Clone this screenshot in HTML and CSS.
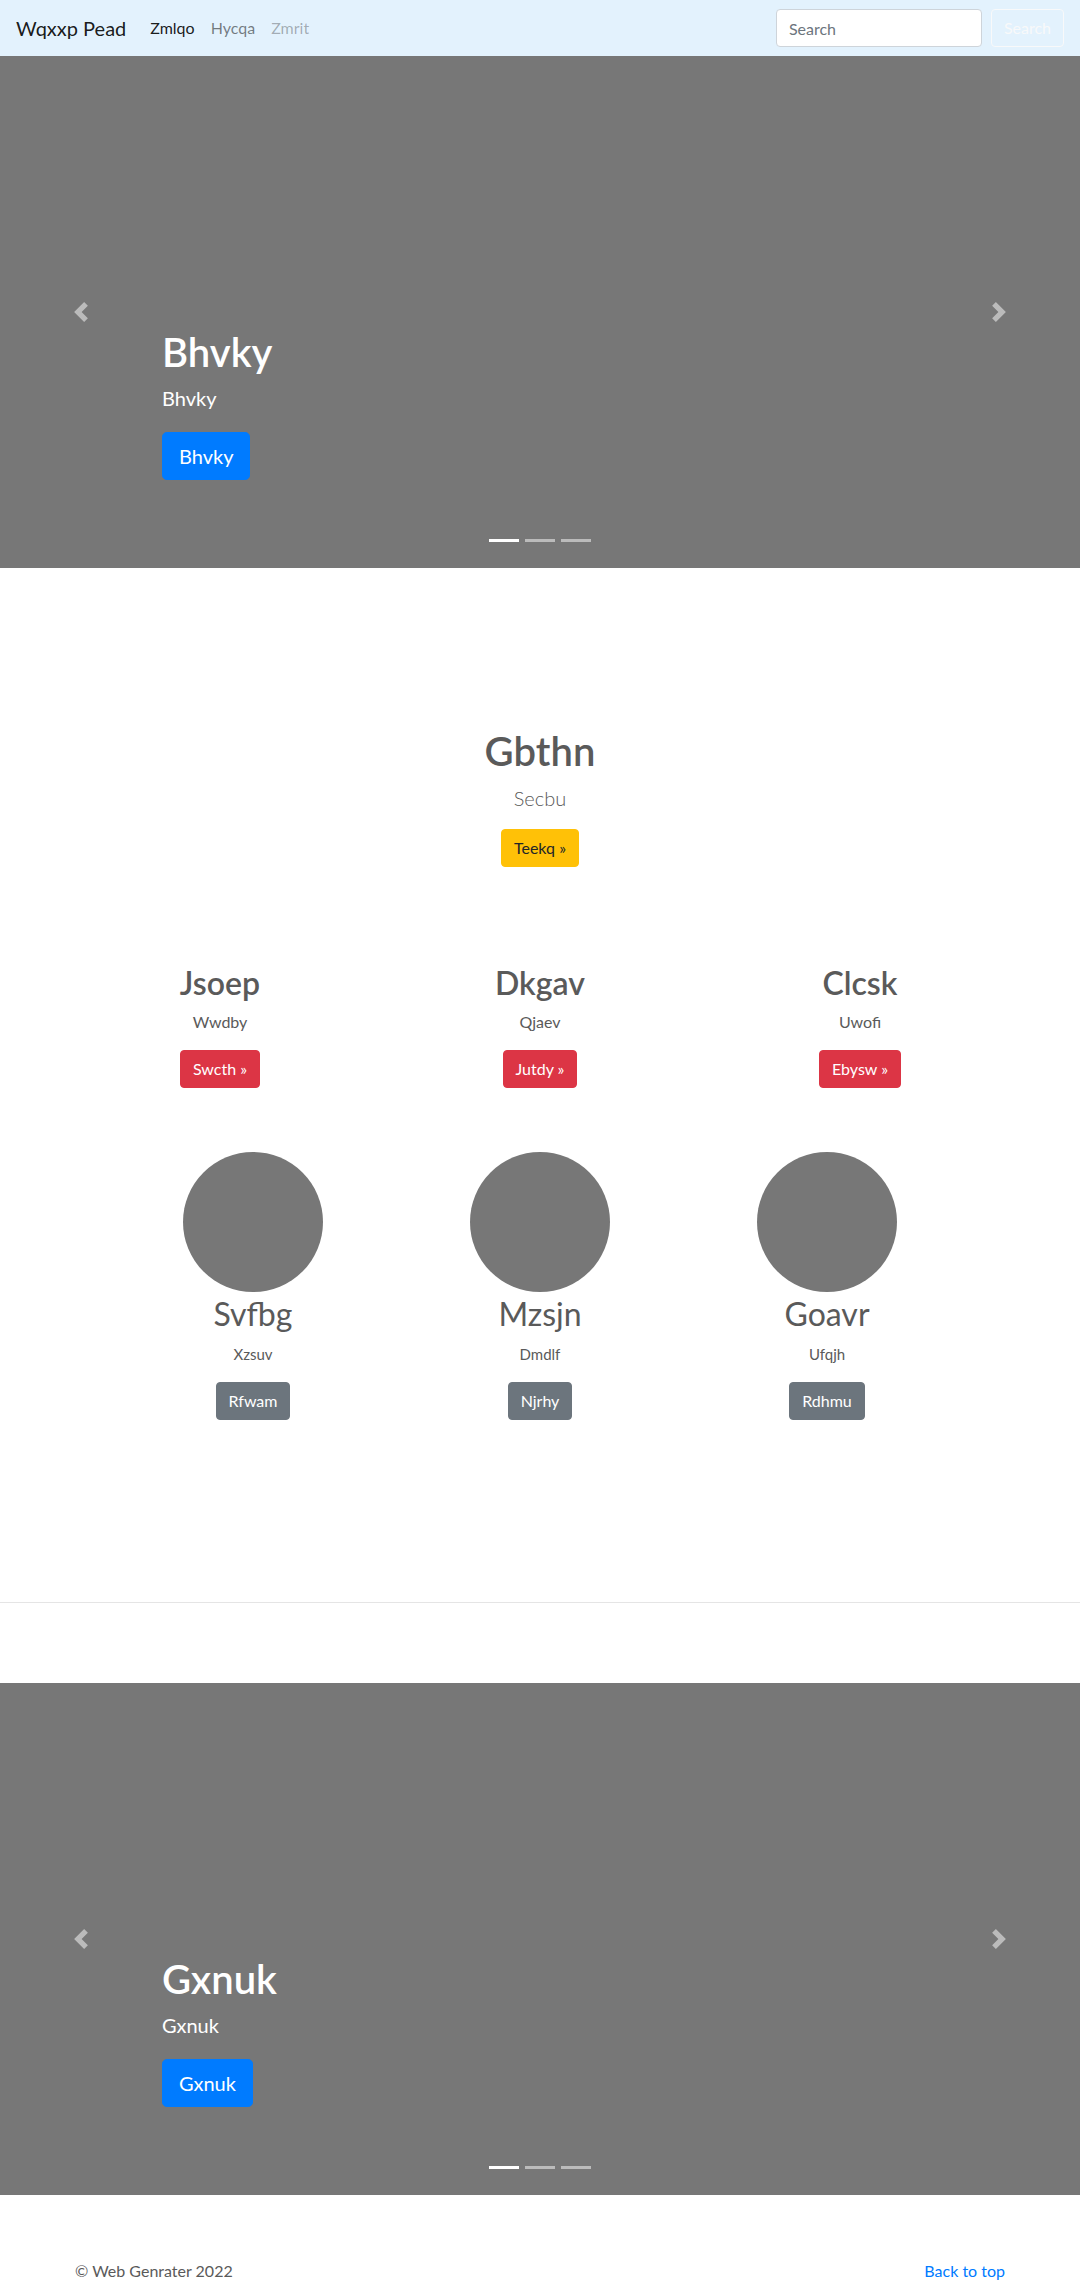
FILE: index.html
```html
<!DOCTYPE html>
<html lang="en">
<head>
<meta charset="utf-8">
<title>Wqxxp Pead</title>
<link rel="stylesheet" href="styles.css">
</head>
<body>
<header class="navbar">
  <a class="brand" href="#">Wqxxp Pead</a>
  <ul class="nav">
    <li><a class="nav-link active" href="#">Zmlqo</a></li>
    <li><a class="nav-link" href="#">Hycqa</a></li>
    <li><a class="nav-link disabled" href="#">Zmrit</a></li>
  </ul>
  <form class="search">
    <input class="search-input" type="text" placeholder="Search">
    <button class="search-btn" type="button">Search</button>
  </form>
</header>

<main>
  <section class="carousel">
    <ol class="indicators">
      <li class="active"></li>
      <li></li>
      <li></li>
    </ol>
    <div class="caption">
      <h1 class="caption-title">Bhvky</h1>
      <p class="caption-text">Bhvky</p>
      <div class="caption-action"><a class="btn btn-lg btn-primary" href="#">Bhvky</a></div>
    </div>
    <a class="control control-prev" href="#"><svg class="control-icon" viewBox="0 0 8 8" width="20" height="20"><path fill="#fff" d="M5.25 0l-4 4 4 4 1.5-1.5L4.25 4l2.5-2.5L5.25 0z"/></svg></a>
    <a class="control control-next" href="#"><svg class="control-icon" viewBox="0 0 8 8" width="20" height="20"><path fill="#fff" d="M2.75 0l-1.5 1.5L3.75 4l-2.5 2.5L2.75 8l4-4-4-4z"/></svg></a>
  </section>

  <section class="marketing">
    <div class="intro">
      <h1 class="intro-title">Gbthn</h1>
      <p class="intro-lead">Secbu</p>
      <div class="action"><a class="btn btn-warning" href="#">Teekq &raquo;</a></div>
    </div>

    <div class="features">
      <div class="feature">
        <h2 class="feature-title">Jsoep</h2>
        <p class="feature-text">Wwdby</p>
        <div class="action"><a class="btn btn-danger" href="#">Swcth &raquo;</a></div>
      </div>
      <div class="feature">
        <h2 class="feature-title">Dkgav</h2>
        <p class="feature-text">Qjaev</p>
        <div class="action"><a class="btn btn-danger" href="#">Jutdy &raquo;</a></div>
      </div>
      <div class="feature">
        <h2 class="feature-title">Clcsk</h2>
        <p class="feature-text">Uwofi</p>
        <div class="action"><a class="btn btn-danger" href="#">Ebysw &raquo;</a></div>
      </div>
    </div>

    <div class="people">
      <div class="person">
        <svg class="avatar" width="140" height="140" viewBox="0 0 140 140"><circle cx="70" cy="70" r="70" fill="#777"/></svg>
        <h2 class="person-name">Svfbg</h2>
        <p class="person-text">Xzsuv</p>
        <div class="action"><a class="btn btn-secondary" href="#">Rfwam</a></div>
      </div>
      <div class="person">
        <svg class="avatar" width="140" height="140" viewBox="0 0 140 140"><circle cx="70" cy="70" r="70" fill="#777"/></svg>
        <h2 class="person-name">Mzsjn</h2>
        <p class="person-text">Dmdlf</p>
        <div class="action"><a class="btn btn-secondary" href="#">Njrhy</a></div>
      </div>
      <div class="person">
        <svg class="avatar" width="140" height="140" viewBox="0 0 140 140"><circle cx="70" cy="70" r="70" fill="#777"/></svg>
        <h2 class="person-name">Goavr</h2>
        <p class="person-text">Ufqjh</p>
        <div class="action"><a class="btn btn-secondary" href="#">Rdhmu</a></div>
      </div>
    </div>
  </section>

  <hr class="divider">

  <section class="carousel">
    <ol class="indicators">
      <li class="active"></li>
      <li></li>
      <li></li>
    </ol>
    <div class="caption">
      <h1 class="caption-title">Gxnuk</h1>
      <p class="caption-text">Gxnuk</p>
      <div class="caption-action"><a class="btn btn-lg btn-primary" href="#">Gxnuk</a></div>
    </div>
    <a class="control control-prev" href="#"><svg class="control-icon" viewBox="0 0 8 8" width="20" height="20"><path fill="#fff" d="M5.25 0l-4 4 4 4 1.5-1.5L4.25 4l2.5-2.5L5.25 0z"/></svg></a>
    <a class="control control-next" href="#"><svg class="control-icon" viewBox="0 0 8 8" width="20" height="20"><path fill="#fff" d="M2.75 0l-1.5 1.5L3.75 4l-2.5 2.5L2.75 8l4-4-4-4z"/></svg></a>
  </section>
</main>

<footer class="footer">
  <p class="footer-copy">&copy; Web Genrater 2022</p>
  <p class="footer-top"><a href="#">Back to top</a></p>
</footer>
</body>
</html>
```

FILE: styles.css
```css
* {
  box-sizing: border-box;
}

html, body {
  margin: 0;
  padding: 0;
}

body {
  font-family: Lato, "Open Sans", "Liberation Sans", sans-serif;
  font-size: 16px;
  line-height: 1.5;
  color: #5a5a5a;
  background: #fff;
}

a {
  text-decoration: none;
}

h1, h2, p {
  margin: 0;
}

/* Navbar */
.navbar {
  display: flex;
  align-items: center;
  height: 56px;
  padding: 8px 16px;
  background-color: #e3f2fd;
}

.brand {
  font-size: 20px;
  line-height: 30px;
  padding: 5px 0;
  margin-right: 16px;
  color: rgba(0, 0, 0, 0.9);
}

.nav {
  display: flex;
  list-style: none;
  margin: 0;
  padding: 0;
}

.nav-link {
  display: block;
  padding: 8px;
  font-size: 16px;
  line-height: 24px;
  color: rgba(0, 0, 0, 0.5);
}

.nav-link.active {
  color: rgba(0, 0, 0, 0.9);
}

.nav-link.disabled {
  color: rgba(0, 0, 0, 0.3);
}

.search {
  margin-left: auto;
  display: flex;
  align-items: center;
}

.search-input {
  width: 206px;
  height: 38px;
  padding: 6px 12px;
  margin-right: 9px;
  font: inherit;
  font-size: 16px;
  color: #495057;
  background: #fff;
  border: 1px solid #ced4da;
  border-radius: 4px;
  outline: none;
}

.search-input::placeholder {
  color: #6c757d;
  opacity: 1;
}

.search-btn {
  height: 38px;
  padding: 6px 12px;
  font: inherit;
  font-size: 16px;
  line-height: 24px;
  color: #f8f9fa;
  background: transparent;
  border: 1px solid #f8f9fa;
  border-radius: 4px;
}

/* Carousel */
.carousel {
  position: relative;
  height: 512px;
  margin-bottom: 64px;
  background-color: #777;
  overflow: hidden;
}

.indicators {
  position: absolute;
  left: 0;
  right: 0;
  bottom: 0;
  z-index: 15;
  display: flex;
  justify-content: center;
  margin: 0 15% 16px;
  padding: 0;
  list-style: none;
}

.indicators li {
  box-sizing: content-box;
  width: 30px;
  height: 3px;
  margin: 0 3px;
  background-color: #fff;
  background-clip: padding-box;
  border-top: 10px solid transparent;
  border-bottom: 10px solid transparent;
  opacity: 0.5;
}

.indicators li.active {
  opacity: 1;
}

.caption {
  position: absolute;
  left: 15%;
  right: 15%;
  bottom: 48px;
  z-index: 10;
  padding: 20px 0;
  color: #fff;
  text-align: left;
}

.caption-title {
  font-size: 40px;
  font-weight: 600;
  line-height: 1.2;
  margin-bottom: 8px;
}

.caption-text {
  font-size: 20px;
  line-height: 1.4;
  margin-bottom: 20px;
}

.caption-action {
  display: flex;
  margin-bottom: 20px;
}

.control {
  position: absolute;
  top: 0;
  bottom: 0;
  z-index: 1;
  width: 15%;
  display: flex;
  align-items: center;
  justify-content: center;
  opacity: 0.5;
}

.control-prev {
  left: 0;
}

.control-next {
  right: 0;
}

.control-icon {
  display: block;
  width: 20px;
  height: 20px;
}

/* Buttons */
.btn {
  display: inline-block;
  padding: 6px 12px;
  font-size: 16px;
  line-height: 24px;
  font-weight: 400;
  border: 1px solid transparent;
  border-radius: 4px;
  text-align: center;
  white-space: nowrap;
}

.btn-lg {
  padding: 8px 16px;
  font-size: 20px;
  line-height: 30px;
  border-radius: 4.8px;
}

.btn-primary {
  color: #fff;
  background-color: #007bff;
  border-color: #007bff;
}

.btn-warning {
  color: #212529;
  background-color: #ffc107;
  border-color: #ffc107;
}

.btn-danger {
  color: #fff;
  background-color: #dc3545;
  border-color: #dc3545;
}

.btn-secondary {
  color: #fff;
  background-color: #6c757d;
  border-color: #6c757d;
}

.action {
  display: flex;
  justify-content: center;
  margin-bottom: 16px;
}

/* Marketing */
.marketing {
  text-align: center;
  padding-top: 95px;
  padding-bottom: 166px;
}

.intro-title {
  font-size: 40px;
  font-weight: 600;
  line-height: 1.2;
  margin-bottom: 8px;
}

.intro-lead {
  font-size: 20px;
  font-weight: 300;
  line-height: 1.5;
  margin-bottom: 16px;
}

.features {
  display: grid;
  grid-template-columns: repeat(3, 320px);
  justify-content: center;
  margin-top: 97px;
}

.feature {
  padding: 0 15px;
}

.feature-title {
  font-size: 32px;
  font-weight: 600;
  line-height: 1.2;
  margin-bottom: 8px;
}

.feature-text {
  font-size: 16px;
  line-height: 24px;
  margin-bottom: 16px;
}

.people {
  display: grid;
  grid-template-columns: repeat(3, 287px);
  justify-content: center;
  margin-top: 48px;
}

.avatar {
  display: block;
  margin: 0 auto 3px;
}

.person-name {
  font-size: 32px;
  font-weight: 400;
  line-height: 1.2;
  margin-bottom: 8px;
}

.person-text {
  font-size: 15px;
  line-height: 24px;
  margin-bottom: 16px;
}

.divider {
  margin: 0 0 80px;
  border: 0;
  border-top: 1px solid rgba(0, 0, 0, 0.1);
}

/* Footer */
.footer {
  display: flex;
  justify-content: space-between;
  width: 960px;
  margin: 0 auto;
  padding: 0 15px 16px;
}

.footer p {
  font-size: 16px;
  line-height: 24px;
}

.footer-top a {
  color: #007bff;
}
```
